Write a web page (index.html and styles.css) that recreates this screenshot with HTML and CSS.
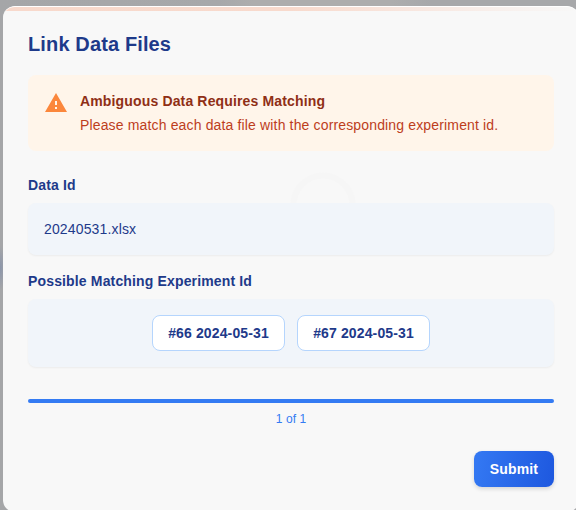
FILE: index.html
```html
<!DOCTYPE html>
<html lang="en">
<head>
<meta charset="utf-8">
<title>Link Data Files</title>
<link rel="stylesheet" href="styles.css">
</head>
<body>
<main class="dialog">
  <svg class="watermark" viewBox="0 0 70 70" aria-hidden="true"><circle cx="35" cy="35" r="29.500" fill="none" stroke="#f6f6f6" stroke-width="6"/></svg>
  <h1 class="title">Link Data Files</h1>
  <section class="alert">
    <svg class="alert-icon" viewBox="0 0 24 24" aria-hidden="true"><path fill="#fb873c" d="M1 21h22L12 2 1 21zm12-3h-2v-2h2v2zm0-4h-2v-4h2v4z"/></svg>
    <div>
      <h2 class="alert-title">Ambiguous Data Requires Matching</h2>
      <p class="alert-text">Please match each data file with the corresponding experiment id.</p>
    </div>
  </section>
  <h3 class="label">Data Id</h3>
  <div class="panel file">20240531.xlsx</div>
  <h3 class="label">Possible Matching Experiment Id</h3>
  <div class="panel options">
    <button class="option">#66 2024-05-31</button>
    <button class="option">#67 2024-05-31</button>
  </div>
  <div class="progress"></div>
  <p class="count">1 of 1</p>
  <footer class="actions"><button class="submit">Submit</button></footer>
</main>
</body>
</html>
```
FILE: styles.css
```css
* { box-sizing: border-box; margin: 0; }
html { height: 100%; overflow: hidden; }
body {
  height: 510px;
  padding: 6px 0 0 3px;
  overflow: hidden;
  background:
    radial-gradient(ellipse 6px 22px at 0 268px, #8b95aa, transparent),
    linear-gradient(90deg, #a5a6a8, #a7a8aa 38%, #adadad 44%, #adadad 68%, #a7a8aa 75%);
  font: 14px/20px "Liberation Sans", Arial, sans-serif;
  color: #1e3a8a;
}
.dialog {
  position: relative;
  width: 576px;
  height: 506px;
  padding: 23px 25px;
  border-top: 1px solid #fff;
  border-radius: 12px;
  background: linear-gradient(90deg, #f8d9cc, #f8dacd 50%, #f8f8f8) top / 100% 4px no-repeat, #f8f8f8;
}
.watermark { position: absolute; left: 285px; top: 163px; width: 70px; height: 70px; }
.title { font-size: 20px; line-height: 28px; letter-spacing: .13px; }
.alert {
  display: flex;
  gap: 12px;
  height: 76px;
  margin-top: 17px;
  padding: 16px;
  border-radius: 8px;
  background: #fff5ea;
}
.alert-icon { width: 24px; height: 24px; }
.alert-title { font-size: 14px; line-height: 20px; letter-spacing: .15px; color: #8f2f16; }
.alert-text { margin-top: 4px; color: #bd3d1c; letter-spacing: .15px; }
.label { margin-top: 16px; font-size: 14px; line-height: 20px; letter-spacing: .15px; }
.alert + .label { margin-top: 24px; }
.panel {
  position: relative;
  margin-top: 8px;
  border-radius: 8px;
  background: #f1f5fa;
  box-shadow: 0 1px 2px rgba(0, 0, 0, .05);
}
.file { height: 52px; padding: 16px; letter-spacing: .15px; }
.options { display: flex; justify-content: center; gap: 12px; height: 68px; padding: 16px; }
.option {
  width: 133px;
  height: 36px;
  padding: 0;
  border: 1px solid #b5d5fd;
  border-radius: 8px;
  background: #fff;
  color: #1e3a8a;
  font: bold 14px/20px "Liberation Sans", Arial, sans-serif;
  letter-spacing: .13px;
}
.progress { height: 4px; margin-top: 32px; border-radius: 2px; background: #347bf3; }
.count { margin-top: 8px; font-size: 12px; line-height: 16px; letter-spacing: .1px; text-align: center; color: #347bf3; }
.actions { display: flex; justify-content: flex-end; margin-top: 24px; }
.submit {
  width: 80px;
  height: 36px;
  padding: 0;
  border: 0;
  border-radius: 8px;
  background: linear-gradient(100deg, #3479f3, #1e58df);
  box-shadow: 0 2px 4px rgba(0, 0, 0, .14);
  color: #fff;
  font: bold 14px/20px "Liberation Sans", Arial, sans-serif;
  letter-spacing: .15px;
}
```
